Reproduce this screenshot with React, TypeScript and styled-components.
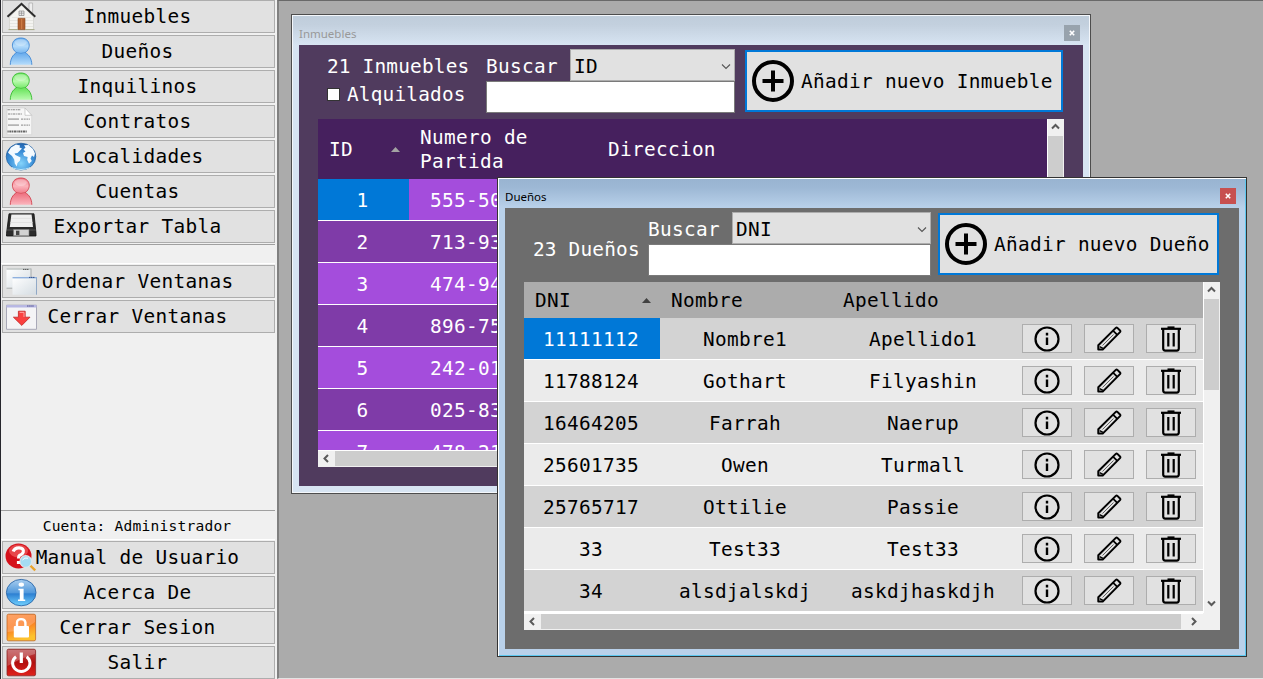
import React from 'react';
import styled, { createGlobalStyle } from 'styled-components';

const GlobalStyle = createGlobalStyle`
  * { box-sizing: border-box; }
  body { margin: 0; background: #ababab; overflow: hidden; }
  button, input { font: inherit; letter-spacing: inherit; color: inherit; border-radius: 0; margin: 0; }
`;

const Shell = styled.div`
  display: flex;
  width: 1263px;
  height: 679px;
  overflow: hidden;
  font-family: 'DejaVu Sans Mono', monospace;
  font-size: 19.4px;
  letter-spacing: 0.31px;
  line-height: 24px;
  color: #000;
`;

const Sidebar = styled.nav`
  flex: none;
  display: flex;
  flex-direction: column;
  width: 277px;
  padding-right: 2px;
  background: #f0f0f0;
  border-left: 1px solid #26262c;
`;

const MenuGroup = styled.div`
  display: flex;
  flex-direction: column;
  gap: 2px;
  padding-left: 1px;
`;

const MenuButton = styled.button`
  display: grid;
  grid-template: 31px / 1fr;
  height: 33px;
  padding: 0;
  border: 1px solid #adadad;
  background: #e1e1e1;
`;

const MenuLabel = styled.span`
  grid-area: 1 / 1;
  align-self: center;
  text-align: center;
  padding-right: 2px;
  white-space: nowrap;
`;

const MenuIcon = styled.svg`
  grid-area: 1 / 1;
  align-self: start;
  margin: 1px 0 0 2px;
  width: 32px;
  height: 29px;
`;

const SidePanel = styled.div<{ $height: number }>`
  display: flex;
  align-items: center;
  justify-content: center;
  height: ${(p) => p.$height}px;
  margin: 1px 0;
  padding: 2px 2px 0 0;
  border-top: 1px solid #a0a0a0;
  border-bottom: 1px solid #fff;
  font-size: 14.6px;
  letter-spacing: 0.2px;
`;

const Spacer = styled.div`
  flex: 1;
`;

const Desktop = styled.main`
  position: relative;
  flex: 1;
  background: #ababab;
  border-left: 2px solid #808080;
  border-top: 1px solid #696969;
  border-bottom: 1px solid #e3e3e3;
`;

const WindowFrame = styled.section<{ $x: number; $y: number; $w: number; $active?: boolean }>`
  position: absolute;
  left: ${(p) => p.$x}px;
  top: ${(p) => p.$y}px;
  width: ${(p) => p.$w}px;
  height: 480px;
  display: flex;
  flex-direction: column;
  padding: 1px;
  border: 1px solid ${(p) => (p.$active ? '#333' : '#4d4d4d')};
  background: ${(p) => (p.$active ? '#b9d1ea' : '#d7e4f2')};
  box-shadow: ${(p) =>
    p.$active
      ? 'inset 1px 1px 0 #fff, inset -1px -1px 0 #5cc8f0'
      : 'inset 0 0 0 1px #f4f7fb'};
`;

const TitleBar = styled.header<{ $active?: boolean }>`
  flex: none;
  display: flex;
  align-items: flex-end;
  justify-content: space-between;
  height: 29px;
  padding: 0 9px 4px 6px;
  font-family: 'Noto Sans', sans-serif;
  font-size: 11.5px;
  letter-spacing: 0;
  line-height: 15px;
  color: ${(p) => (p.$active ? '#000' : '#999')};
  background: ${(p) =>
    p.$active
      ? 'linear-gradient(#99b4d1, #9db8d5 30%, #b9d1ea)'
      : 'linear-gradient(#bfcddb, #c3d0de 30%, #d7e4f2)'};
`;

const CloseButton = styled.button<{ $active?: boolean }>`
  display: flex;
  align-items: center;
  justify-content: center;
  width: 16px;
  height: 16px;
  padding: 0 1px 1px 0;
  border: 0;
  background: ${(p) => (p.$active ? '#c75050' : '#98a3ad')};
`;

const Body = styled.div<{ $bg: string }>`
  flex: 1;
  display: flex;
  flex-direction: column;
  margin: 0 6px 6px;
  padding: 4px 19px 19px;
  background: ${(p) => p.$bg};
`;

const Toolbar = styled.div<{ $cols: string }>`
  display: grid;
  grid-template-columns: ${(p) => p.$cols};
  height: 70px;
  color: #fff;
`;

const Summary = styled.div<{ $pad: string }>`
  padding: ${(p) => p.$pad};
  white-space: nowrap;
  letter-spacing: 0.2px;
`;

const CheckRow = styled.label`
  display: flex;
  align-items: center;
  gap: 7px;
  margin: 4px 0 0;
`;

const CheckBox = styled.span`
  width: 13px;
  height: 13px;
  margin-top: -2px;
  background: #fff;
  border: 1px solid #333;
`;

const Search = styled.div`
  display: flex;
  flex-direction: column;
`;

const SearchRow = styled.div<{ $combo: number }>`
  display: grid;
  grid-template-columns: 1fr ${(p) => p.$combo}px;
  height: 32px;
  align-items: center;
`;

const SearchLabel = styled.span`
  padding-top: 4px;
`;

const Combo = styled.div`
  display: flex;
  align-items: center;
  justify-content: space-between;
  height: 32px;
  padding: 3px 3px 0;
  color: #000;
  background: #e1e1e1;
  border: 1px solid #adadad;
`;

const SearchInput = styled.input`
  width: 100%;
  height: 32px;
  border: 1px solid #7a7a7a;
  background: #fff;
`;

const AddButton = styled.button`
  display: flex;
  align-items: center;
  gap: 6px;
  height: 62px;
  margin-top: 1px;
  padding: 0 0 0 4px;
  color: #000;
  background: #e1e1e1;
  border: 2px solid #0078d7;
  white-space: nowrap;
`;

const AddLabel = styled.span`
  padding-top: 2px;
`;

const Grid = styled.div`
  display: grid;
  grid-template-columns: 1fr 17px;
  grid-template-rows: 1fr 17px;
  height: 348px;
`;

const TableArea = styled.div`
  overflow: hidden;
  background: #fff;
`;

const HeadRow = styled.div<{ $cols: string; $h: number; $bg: string; $fg: string }>`
  display: grid;
  grid-template-columns: ${(p) => p.$cols};
  align-items: center;
  height: ${(p) => p.$h}px;
  padding-top: 2px;
  color: ${(p) => p.$fg};
  background: ${(p) => p.$bg};
`;

const HeadCell = styled.div`
  display: flex;
  align-items: center;
  justify-content: space-between;
  padding: 0 9px 0 11px;

  svg {
    margin-top: -2px;
  }
`;

const Row = styled.div<{ $cols: string; $bg: string; $fg: string }>`
  display: grid;
  grid-template-columns: ${(p) => p.$cols};
  height: 42px;
  color: ${(p) => p.$fg};
  background: ${(p) => p.$bg};
  border-bottom: 1px solid #fff;
`;

const Cell = styled.div<{ $selected?: boolean; $left?: boolean; $pad?: string }>`
  display: flex;
  align-items: center;
  justify-content: ${(p) => (p.$left ? 'flex-start' : 'center')};
  padding: ${(p) => p.$pad || '3px 2px 0 0'};
  white-space: nowrap;
  ${(p) => p.$selected && 'background: #0078d7; color: #fff;'}
`;

const ActionButton = styled.button`
  display: flex;
  align-items: center;
  justify-content: center;
  width: 50px;
  height: 29px;
  padding: 0;
  border: 1px solid #adadad;
  background: #e1e1e1;
`;

const VScroll = styled.div`
  display: flex;
  flex-direction: column;
  background: #f0f0f0;
  border-left: 1px solid #fff;
`;

const VThumb = styled.div<{ $h: number }>`
  height: ${(p) => p.$h}px;
  margin-right: 1px;
  background: #cdcdcd;
`;

const HScroll = styled.div`
  display: flex;
  background: #f0f0f0;
  border-top: 1px solid #fff;
`;

const HThumb = styled.div`
  flex: 1;
  margin-bottom: 1px;
  background: #cdcdcd;
`;

const ArrowBox = styled.div<{ $w: number }>`
  flex: none;
  display: flex;
  align-items: center;
  justify-content: center;
  width: ${(p) => p.$w}px;
  height: 17px;
  padding-bottom: 2px;
`;

const Corner = styled.div`
  background: #f0f0f0;
`;

function ScrollArrow({ dir, w = 17 }: { dir: 'up' | 'down' | 'left' | 'right'; w?: number }) {
  const d = {
    up: 'M1 6.5 4.5 3 8 6.5',
    down: 'M1 2.5 4.5 6 8 2.5',
    left: 'M6 1 2.5 4.5 6 8',
    right: 'M4 1 7.5 4.5 4 8',
  }[dir];
  return (
    <ArrowBox $w={w}>
      <svg width="9" height="9" viewBox="0 0 9 9">
        <path d={d} fill="none" stroke="#5a5a5a" strokeWidth="2" />
      </svg>
    </ArrowBox>
  );
}

const Chevron = () => (
  <svg width="10" height="8" viewBox="0 0 10 8">
    <path d="M1 1.5 5 5.5 9 1.5" fill="none" stroke="#555" strokeWidth="1.1" />
  </svg>
);

const SortMark = ({ color }: { color: string }) => (
  <svg width="9" height="5" viewBox="0 0 9 5">
    <path d="M0 5 4.5 0 9 5Z" fill={color} />
  </svg>
);

const PlusCircle = () => (
  <svg width="44" height="44" viewBox="0 0 44 44">
    <circle cx="22" cy="22" r="19" fill="none" stroke="#000" strokeWidth="4" />
    <path d="M22 11.5V32.5M11.5 22H32.5" stroke="#000" strokeWidth="4" />
  </svg>
);

const InfoIcon = () => (
  <svg width="26" height="26" viewBox="0 0 26 26">
    <circle cx="13" cy="13" r="11.5" fill="none" stroke="#000" strokeWidth="2.2" />
    <path d="M13 6.8v2.6M13 11.4v7.6" stroke="#000" strokeWidth="2.4" />
  </svg>
);

const PencilIcon = () => (
  <svg width="26" height="26" viewBox="0 0 26 26" fill="none" stroke="#000" strokeWidth="2">
    <path d="M2.3 23.6V19.2L19.8 1.9Q20.6 1.2 21.4 1.9L24 4.5Q24.7 5.3 24 6.1L6.7 23.6Z" strokeLinejoin="round" />
    <path d="M17 4.6 21.3 8.9" strokeWidth="1.8" />
    <path d="M3.6 20.6 7 22.4" strokeWidth="1.4" />
    <path d="M6.5 19.5 17.5 8.5" stroke="#444" strokeWidth=".8" />
  </svg>
);

const TrashIcon = () => (
  <svg width="22" height="26" viewBox="0 0 22 26" fill="none" stroke="#000">
    <path d="M1 2.8H21" strokeWidth="2.2" />
    <path d="M7.5 1.2H14.5" strokeWidth="1.6" />
    <path d="M3.2 3V22.6Q3.2 24.6 5.2 24.6H16.8Q18.8 24.6 18.8 22.6V3" strokeWidth="2.2" />
    <path d="M8.3 7V20.4M13.7 7V20.4" strokeWidth="2.2" />
  </svg>
);

const CloseGlyph = () => (
  <svg width="6" height="6" viewBox="0 0 6 6">
    <path d="M.8.8 5.2 5.2M5.2.8.8 5.2" stroke="#fff" strokeWidth="1.6" />
  </svg>
);

/* Sidebar pictograms, all on a 32x29 field */

const HouseArt = () => (
  <>
    <path d="M24 1h3.6v12H24z" fill="#eee" stroke="#aaa" strokeWidth=".7" />
    <path d="M4.5 15 16.5 3 28.5 15V27.5H4.5Z" fill="#f4f4f1" stroke="#c9c9c4" strokeWidth=".6" />
    <path d="M5 18.5H28M5 21.5H28M5 24.5H28M7 15.5H26" stroke="#dcdcd8" strokeWidth=".6" />
    <path d="M2.5 14.7 16.5 1.8 30.3 14.7" fill="none" stroke="#2d2d2d" strokeWidth="2" />
    <path d="M14 9h5v4.5h-5z" fill="#e8e8e8" stroke="#888" strokeWidth=".7" />
    <path d="M16.5 9v4.5M14 11.2h5" stroke="#888" strokeWidth=".6" />
    <path d="M13 16.3h7v11.4h-7z" fill="#b0602f" stroke="#8a4a20" strokeWidth=".6" />
    <path d="M16.7 17v10" stroke="#d98a52" strokeWidth=".8" />
    <path d="M3.5 27.6H13M20 27.6H29.5" stroke="#a8aa88" />
  </>
);

const PersonArt = ({ id, light, mid, edge }: { id: string; light: string; mid: string; edge: string }) => (
  <>
    <defs>
      <linearGradient id={id} x1="0" y1="0" x2="0" y2="1">
        <stop offset="0" stopColor={mid} />
        <stop offset=".3" stopColor={light} />
        <stop offset=".6" stopColor={mid} />
        <stop offset="1" stopColor={light} />
      </linearGradient>
    </defs>
    <path
      d="M5.3 27.8C5.3 22 7.8 17.8 11.6 15.6C5.2 11.8 5.8 1 15.8 1S26.4 11.8 20.2 15.6C24.2 17.8 26.8 22 26.8 27.8Z"
      fill={`url(#${id})`}
    />
    <path
      d="M5.3 27.8C5.3 22 7.8 17.8 11.6 15.6C5.2 11.8 5.8 1 15.8 1S26.4 11.8 20.2 15.6C24.2 17.8 26.8 22 26.8 27.8"
      fill="none"
      stroke={edge}
      strokeWidth=".9"
    />
    <path d="M11 15.4Q16 17.4 20.8 15.4" fill="none" stroke={edge} strokeWidth=".8" opacity=".8" />
    <ellipse cx="15.8" cy="5.6" rx="6" ry="3.4" fill="#fff" opacity=".3" />
  </>
);

const DocumentArt = () => (
  <>
    <path d="M2 1H20L26.7 8.3V27.7H2Z" fill="#f6f6f6" stroke="#d2d2d2" strokeWidth=".7" />
    <path d="M20 1V8.3H26.7Z" fill="#fff" stroke="#bbb" strokeWidth=".7" />
    <path d="M2.5 2.8H16M3 7H17" stroke="#858585" strokeWidth="1.1" strokeDasharray="2.4 .8 1.2 .6" />
    <path d="M3 12.2H14M3 18.2H14" stroke="#b4b4b4" strokeWidth="1.8" />
    <path d="M16 12.2H25M16 18.2H25" stroke="#9d9d9d" strokeWidth="1.2" strokeDasharray="2 .7" />
    <path d="M2.5 24.5H22" stroke="#666" strokeWidth="2" strokeDasharray="1.2 .6 2.2 .5" />
  </>
);

const GlobeArt = () => (
  <>
    <defs>
      <radialGradient id="globe" cx=".5" cy=".75" r=".8">
        <stop offset="0" stopColor="#85d4fb" />
        <stop offset=".5" stopColor="#3e92da" />
        <stop offset="1" stopColor="#1d5ca8" />
      </radialGradient>
    </defs>
    <ellipse cx="16" cy="14.6" rx="14.8" ry="13.4" fill="url(#globe)" stroke="#1f5e9e" strokeWidth=".7" />
    <path
      d="M3 10.5 6 5.5 11 2.6 15 3.4 14.5 5.5 17 6.5 15 8.5 12.5 11 9.5 11.6 10.5 13 15.5 15.5 15 18.5 12.5 21 11.8 24.5 9.8 21.5 9.2 17.5 7 14 4.5 12ZM19 3.2 23.5 2.9 28 7 30 11.5 29 15 27 13.5 25.5 16.5 26.8 19 24 21.8 22.2 18 22.6 15 19 14 18 11 20.5 9.4 18.5 7.5 20.5 5.5Z"
      fill="#f4faff"
    />
    <path d="M7 25.6Q16 29.4 25 25.6" fill="none" stroke="#bdeaff" />
  </>
);

const FloppyArt = () => (
  <>
    <path d="M4 1.8H29L31 21.5V24H1.5V21.5Z" fill="#2c2c2c" stroke="#111" strokeWidth=".8" />
    <path d="M6.4 2.6H26.6L28 15H4.8Z" fill="#f0f0f0" />
    <path d="M6 6.3H27M5.6 10.5H27.4" stroke="#e2e2e2" />
    <path d="M2 18H30.6" stroke="#555" strokeWidth="1" />
    <path d="M8.5 17.5H24V23.8H8.5Z" fill="#d2d2d2" stroke="#777" strokeWidth=".6" />
    <path d="M11 18.7h3.4v4.4H11z" fill="#444" />
  </>
);

const CascadeArt = () => (
  <>
    <defs>
      <linearGradient id="cascade" x1="0" y1="0" x2="1" y2="1">
        <stop offset="0" stopColor="#fff" />
        <stop offset="1" stopColor="#d4dce2" />
      </linearGradient>
    </defs>
    <path d="M1.5 1.5H26V21.5H1.5Z" fill="url(#cascade)" />
    <path d="M26 1.5V10M1.5 21.2H7.5" stroke="#a0a4a4" strokeWidth=".9" />
    <path d="M1.5 2H26" stroke="#b2bab7" strokeWidth="1.2" />
    <path d="M18 2.4h6" stroke="#555" strokeDasharray="1.4 .5" />
    <path d="M7.5 10H31.7V27.7H7.5Z" fill="url(#cascade)" />
    <path d="M31.6 10V27.7" stroke="#7f9cc0" strokeWidth=".9" />
    <path d="M7.5 10.7H31.7" stroke="#8fb0de" strokeWidth="1.4" />
    <path d="M24 10.4h6" stroke="#33508a" strokeDasharray="1.4 .5" />
  </>
);

const CloseWindowsArt = () => (
  <>
    <path d="M1.5 3.2H31.5V27.3H1.5Z" fill="#f4f4f6" stroke="#a9a9b8" strokeWidth="1" />
    <path d="M1.5 4.3H31.5" stroke="#b7b7e4" strokeWidth="2.4" />
    <path d="M22 4h7" stroke="#55558e" strokeDasharray="1.6 .5" />
    <path d="M13.4 9.2H20.2V15.2H25L16.8 23.4 8.4 15.2H13.4Z" fill="#fa4040" stroke="#c02626" strokeWidth=".8" />
    <path d="M14.6 10.4H19V15" fill="none" stroke="#ffa0a0" />
  </>
);

const HelpArt = () => (
  <>
    <ellipse cx="13.5" cy="13" rx="13" ry="12.4" fill="#d5111b" />
    <ellipse cx="13.5" cy="8" rx="9.5" ry="6.5" fill="#f36a6a" opacity=".6" />
    <path
      d="M8.2 8.5Q9.5 4.7 14 4.8Q19.3 5.2 18.2 9.2Q17.4 11.4 14.8 12.2Q13.5 13 13.5 15.5M13.5 18V21"
      fill="none"
      stroke="#fff"
      strokeWidth="3.2"
    />
    <path d="M25.2 22.5 30.2 27.4" stroke="#e9a32b" strokeWidth="2.4" />
    <circle cx="20.8" cy="18.5" r="5.8" fill="#a5dcf3" stroke="#d8e7ed" strokeWidth="1.2" />
    <path d="M17.5 17Q19.5 14 23 15.2" fill="none" stroke="#fff" />
  </>
);

const AboutArt = () => (
  <>
    <defs>
      <linearGradient id="about" x1="0" y1="0" x2="0" y2="1">
        <stop offset="0" stopColor="#a8cdef" />
        <stop offset=".5" stopColor="#5299dc" />
        <stop offset=".55" stopColor="#2d80d2" />
        <stop offset="1" stopColor="#72d2ff" />
      </linearGradient>
    </defs>
    <ellipse cx="16.2" cy="14.6" rx="14.8" ry="13.2" fill="url(#about)" stroke="#2a66a8" strokeWidth=".9" />
    <ellipse cx="16.3" cy="6.6" rx="2.7" ry="2.2" fill="#fff" />
    <path d="M13.4 10.8H18.6V21.4H20.2V23H13V21.4H14.8V12.3H13.4Z" fill="#fff" />
  </>
);

const LockArt = () => (
  <>
    <defs>
      <linearGradient id="lock" x1="0" y1="0" x2=".3" y2="1">
        <stop offset="0" stopColor="#ff8a3d" />
        <stop offset=".5" stopColor="#fb7a22" />
        <stop offset="1" stopColor="#fdc22d" />
      </linearGradient>
    </defs>
    <rect x="2" y="1.2" width="28.6" height="26.6" rx="1.6" fill="url(#lock)" stroke="#c06a28" strokeWidth=".8" />
    <path d="M2.5 2H30V9Q20 18 2.5 19Z" fill="#fff" opacity=".22" />
    <path d="M12 14.5V9.5Q12.2 6.1 16.1 6.1T20.4 9.5V14.5" fill="none" stroke="#fff" strokeWidth="2.4" />
    <rect x="8.8" y="13" width="15.2" height="11.4" rx="1" fill="#fff" />
  </>
);

const PowerArt = () => (
  <>
    <defs>
      <linearGradient id="power" x1="0" y1="0" x2="0" y2="1">
        <stop offset="0" stopColor="#b8484a" />
        <stop offset=".5" stopColor="#b3100f" />
        <stop offset="1" stopColor="#e0221c" />
      </linearGradient>
    </defs>
    <rect x="2" y="1.2" width="28.6" height="26.6" rx="1.6" fill="url(#power)" stroke="#8a2626" strokeWidth=".8" />
    <path d="M2.5 2H30V6Q18 9 2.5 18Z" fill="#fff" opacity=".25" />
    <path d="M11 8.7A8.7 8.2 0 1 0 21.6 8.7" fill="none" stroke="#fff" strokeWidth="3" />
    <path d="M16.3 4.5V15" stroke="#fff" strokeWidth="3.2" />
  </>
);

type Entry = [string, React.ReactNode];

const mainEntries: Entry[] = [
  ['Inmuebles', <HouseArt />],
  ['Dueños', <PersonArt id="pBlue" light="#b5dcfb" mid="#6dafee" edge="#3f87d4" />],
  ['Inquilinos', <PersonArt id="pGreen" light="#b9fbae" mid="#6fe562" edge="#35b92f" />],
  ['Contratos', <DocumentArt />],
  ['Localidades', <GlobeArt />],
  ['Cuentas', <PersonArt id="pRed" light="#fbb5bd" mid="#ef7584" edge="#d0434f" />],
  ['Exportar Tabla', <FloppyArt />],
];

const windowEntries: Entry[] = [
  ['Ordenar Ventanas', <CascadeArt />],
  ['Cerrar Ventanas', <CloseWindowsArt />],
];

const sessionEntries: Entry[] = [
  ['Manual de Usuario', <HelpArt />],
  ['Acerca De', <AboutArt />],
  ['Cerrar Sesion', <LockArt />],
  ['Salir', <PowerArt />],
];

const Menu = ({ entries }: { entries: Entry[] }) => (
  <MenuGroup>
    {entries.map(([label, art]) => (
      <MenuButton key={label}>
        <MenuIcon viewBox="0 0 32 29">{art}</MenuIcon>
        <MenuLabel>{label}</MenuLabel>
      </MenuButton>
    ))}
  </MenuGroup>
);

const properties = [
  ['1', '555-50'],
  ['2', '713-93'],
  ['3', '474-94'],
  ['4', '896-75'],
  ['5', '242-01'],
  ['6', '025-83'],
  ['7', '478-21'],
];

const owners = [
  ['11111112', 'Nombre1', 'Apellido1'],
  ['11788124', 'Gothart', 'Filyashin'],
  ['16464205', 'Farrah', 'Naerup'],
  ['25601735', 'Owen', 'Turmall'],
  ['25765717', 'Ottilie', 'Passie'],
  ['33', 'Test33', 'Test33'],
  ['34', 'alsdjalskdj', 'askdjhaskdjh'],
];

const propertyCols = '91px 188px 1fr';
const ownerCols = '136px 172px 184px 62px 62px 62px';

const PropertiesWindow = () => (
  <WindowFrame $x={12} $y={13} $w={800}>
    <TitleBar>
      Inmuebles
      <CloseButton aria-label="Cerrar">
        <CloseGlyph />
      </CloseButton>
    </TitleBar>
    <Body $bg="#503b5e">
      <Toolbar $cols="168px 249px 10px 318px">
        <Summary $pad="6px 0 0 9px">
          21 Inmuebles
          <CheckRow>
            <CheckBox />
            Alquilados
          </CheckRow>
        </Summary>
        <Search>
          <SearchRow $combo={165}>
            <SearchLabel>Buscar</SearchLabel>
            <Combo>
              ID
              <Chevron />
            </Combo>
          </SearchRow>
          <SearchInput />
        </Search>
        <span />
        <AddButton>
          <PlusCircle />
          <AddLabel>Añadir nuevo Inmueble</AddLabel>
        </AddButton>
      </Toolbar>
      <Grid>
        <TableArea>
          <HeadRow $cols={propertyCols} $h={60} $bg="#46205e" $fg="#fff">
            <HeadCell>
              ID
              <SortMark color="#a3a3a3" />
            </HeadCell>
            <HeadCell>
              Numero de
              <br />
              Partida
            </HeadCell>
            <HeadCell>Direccion</HeadCell>
          </HeadRow>
          {properties.map(([id, lot], i) => (
            <Row key={id} $cols={propertyCols} $bg={i % 2 ? '#7f3ba8' : '#a44ddc'} $fg="#fff">
              <Cell $selected={i === 0}>{id}</Cell>
              <Cell $left $pad="3px 0 0 21px">
                {lot}
              </Cell>
            </Row>
          ))}
        </TableArea>
        <VScroll>
          <ScrollArrow dir="up" w={15} />
          <VThumb $h={180} />
        </VScroll>
        <HScroll>
          <ScrollArrow dir="left" />
          <HThumb />
          <ScrollArrow dir="right" />
        </HScroll>
        <Corner />
      </Grid>
    </Body>
  </WindowFrame>
);

const OwnersWindow = () => (
  <WindowFrame $x={218} $y={176} $w={750} $active>
    <TitleBar $active>
      Dueños
      <CloseButton $active aria-label="Cerrar">
        <CloseGlyph />
      </CloseButton>
    </TitleBar>
    <Body $bg="#6d6d6d">
      <Toolbar $cols="124px 283px 7px 281px">
        <Summary $pad="26px 0 0 9px">23 Dueños</Summary>
        <Search>
          <SearchRow $combo={199}>
            <SearchLabel>Buscar</SearchLabel>
            <Combo>
              DNI
              <Chevron />
            </Combo>
          </SearchRow>
          <SearchInput />
        </Search>
        <span />
        <AddButton>
          <PlusCircle />
          <AddLabel>Añadir nuevo Dueño</AddLabel>
        </AddButton>
      </Toolbar>
      <Grid>
        <TableArea>
          <HeadRow $cols={ownerCols} $h={36} $bg="#acacac" $fg="#000">
            <HeadCell>
              DNI
              <SortMark color="#404040" />
            </HeadCell>
            <HeadCell>Nombre</HeadCell>
            <HeadCell>Apellido</HeadCell>
          </HeadRow>
          {owners.map(([dni, name, surname], i) => (
            <Row key={dni} $cols={ownerCols} $bg={i % 2 ? '#ebebeb' : '#d3d3d3'} $fg="#000">
              <Cell $selected={i === 0}>{dni}</Cell>
              <Cell>{name}</Cell>
              <Cell>{surname}</Cell>
              <Cell $pad="0">
                <ActionButton aria-label="Detalle">
                  <InfoIcon />
                </ActionButton>
              </Cell>
              <Cell $pad="0">
                <ActionButton aria-label="Editar">
                  <PencilIcon />
                </ActionButton>
              </Cell>
              <Cell $pad="0">
                <ActionButton aria-label="Eliminar">
                  <TrashIcon />
                </ActionButton>
              </Cell>
            </Row>
          ))}
        </TableArea>
        <VScroll>
          <ScrollArrow dir="up" w={15} />
          <VThumb $h={91} />
          <Spacer />
          <ScrollArrow dir="down" w={15} />
        </VScroll>
        <HScroll>
          <ScrollArrow dir="left" />
          <HThumb />
          <ScrollArrow dir="right" w={22} />
        </HScroll>
        <Corner />
      </Grid>
    </Body>
  </WindowFrame>
);

export default function App() {
  return (
    <>
      <GlobalStyle />
      <Shell>
        <Sidebar>
          <Menu entries={mainEntries} />
          <SidePanel $height={20} />
          <Menu entries={windowEntries} />
          <Spacer />
          <SidePanel $height={30}>Cuenta: Administrador</SidePanel>
          <Menu entries={sessionEntries} />
        </Sidebar>
        <Desktop>
          <PropertiesWindow />
          <OwnersWindow />
        </Desktop>
      </Shell>
    </>
  );
}
